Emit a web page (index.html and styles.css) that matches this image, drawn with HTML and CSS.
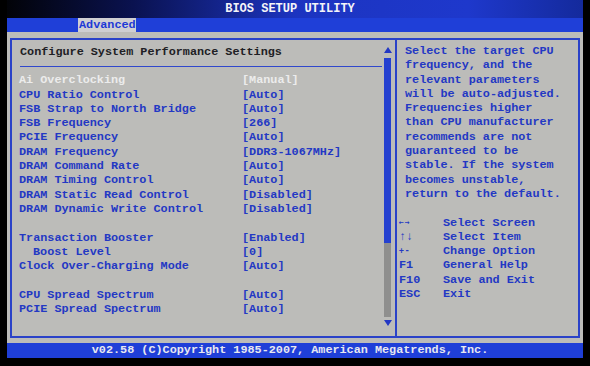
FILE: index.html
```html
<!DOCTYPE html>
<html lang="en">
<head>
  <meta charset="UTF-8" />
  <meta name="viewport" content="width=device-width, initial-scale=1.0" />
  <title>BIOS Setup Utility</title>
  <link rel="stylesheet" href="styles.css">
</head>
<body>
  <div class="screen">
    <header class="title-bar">BIOS SETUP UTILITY</header>
    <nav class="tab-bar">
      <span class="tab active">Advanced</span>
    </nav>

    <main class="panel">
      <div class="frame">
        <section class="settings">
          <div class="settings-body">
            <h1 class="heading">Configure System Performance Settings</h1>
            <ul class="items">
              <li class="item selected"><span>Ai Overclocking</span><span>[Manual]</span></li>
              <li class="item"><span>CPU Ratio Control</span><span>[Auto]</span></li>
              <li class="item"><span>FSB Strap to North Bridge</span><span>[Auto]</span></li>
              <li class="item"><span>FSB Frequency</span><span>[266]</span></li>
              <li class="item"><span>PCIE Frequency</span><span>[Auto]</span></li>
              <li class="item"><span>DRAM Frequency</span><span>[DDR3-1067MHz]</span></li>
              <li class="item"><span>DRAM Command Rate</span><span>[Auto]</span></li>
              <li class="item"><span>DRAM Timing Control</span><span>[Auto]</span></li>
              <li class="item"><span>DRAM Static Read Control</span><span>[Disabled]</span></li>
              <li class="item"><span>DRAM Dynamic Write Control</span><span>[Disabled]</span></li>
              <li class="item blank"></li>
              <li class="item"><span>Transaction Booster</span><span>[Enabled]</span></li>
              <li class="item sub"><span>Boost Level</span><span>[0]</span></li>
              <li class="item"><span>Clock Over-Charging Mode</span><span>[Auto]</span></li>
              <li class="item blank"></li>
              <li class="item"><span>CPU Spread Spectrum</span><span>[Auto]</span></li>
              <li class="item"><span>PCIE Spread Spectrum</span><span>[Auto]</span></li>
            </ul>
          </div>
          <div class="scrollbar">
            <span class="arrow up"></span>
            <span class="thumb"></span>
            <span class="track"></span>
            <span class="arrow down"></span>
          </div>
        </section>

        <aside class="help">
          <p class="help-text">Select the target CPU<br>frequency, and the<br>relevant parameters<br>will be auto-adjusted.<br>Frequencies higher<br>than CPU manufacturer<br>recommends are not<br>guaranteed to be<br>stable. If the system<br>becomes unstable,<br>return to the default.</p>
          <ul class="keys">
            <li><span class="key small">&larr;&rarr;</span>Select Screen</li>
            <li><span class="key">&uarr;&darr;</span>Select Item</li>
            <li><span class="key small">+-</span>Change Option</li>
            <li><span class="key">F1</span>General Help</li>
            <li><span class="key">F10</span>Save and Exit</li>
            <li><span class="key">ESC</span>Exit</li>
          </ul>
        </aside>
      </div>
    </main>

    <footer class="status-bar">v02.58 (C)Copyright 1985-2007, American Megatrends, Inc.</footer>
  </div>
</body>
</html>
```

FILE: styles.css
```css
body {
  margin: 0;
  background: #000;
  font-family: "Liberation Mono", "DejaVu Sans Mono", monospace;
  font-weight: bold;
  font-size: 11.8px;
}

.screen {
  width: 576px;
  margin-left: 7px;
  display: flex;
  flex-direction: column;
}

.title-bar {
  height: 18px;
  line-height: 18px;
  padding-right: 10px;
  text-align: center;
  color: #f4f4f8;
  font-size: 12px;
  background: linear-gradient(to right, #020308 0%, #0a1250 22%, #1c34c0 50%, #1e38cc 80%, #142a9c 100%);
}

.tab-bar {
  height: 14px;
  background: #1f3fd8;
  padding-left: 71px;
}

.tab {
  display: inline-block;
  height: 14px;
  line-height: 14px;
  padding: 0 0 0 1px;
  color: #1d3ad6;
  background: #cfcfd2;
}

.panel {
  height: 311px;
  box-sizing: border-box;
  padding: 6px 3px 5px 3px;
  background: #bcbcb9;
}

.frame {
  height: 100%;
  box-sizing: border-box;
  border: 2px solid #2a42c8;
  display: grid;
  grid-template-columns: 385px 1fr;
}

.settings {
  display: flex;
  border-right: 2px solid #2a42c8;
}

.settings-body {
  flex: 1;
  padding-left: 7px;
}

.heading {
  margin: 5px 0 0 1px;
  padding-bottom: 7px;
  font-size: 11.8px;
  line-height: 14.3px;
  color: #202024;
  border-bottom: 1.5px solid #3048cc;
}

.items {
  list-style: none;
  margin: 6px 0 0;
  padding: 0;
  color: #2338c4;
}

.item {
  display: grid;
  grid-template-columns: 223px 1fr;
  height: 14.3px;
  line-height: 14.3px;
}

.item.selected {
  color: #ececec;
}

.item.sub span:first-child {
  padding-left: 14px;
}

.scrollbar {
  width: 7px;
  margin: 7px 4px 0 2px;
  display: flex;
  flex-direction: column;
  align-items: center;
}

.arrow {
  width: 0;
  height: 0;
  border-left: 4px solid transparent;
  border-right: 4px solid transparent;
}

.arrow.up {
  border-bottom: 6px solid #2338c4;
  margin-bottom: 5px;
}

.arrow.down {
  border-top: 6px solid #2338c4;
  margin-top: 3px;
}

.thumb {
  width: 7px;
  height: 185px;
  background: #2440d0;
}

.track {
  width: 7px;
  height: 74px;
  background: #8f8f8e;
}

.help {
  color: #2338c4;
  padding-top: 4px;
}

.help-text {
  margin: 0 0 0 8px;
  line-height: 14.3px;
}

.keys {
  list-style: none;
  margin: 14.3px 0 0 2px;
  padding: 0;
}

.keys li {
  display: flex;
  height: 14.3px;
  line-height: 14.3px;
}

.key {
  width: 44px;
  flex-shrink: 0;
}

.key.small {
  font-family: "DejaVu Sans Mono", monospace;
  font-size: 8px;
  letter-spacing: 1px;
}

.status-bar {
  height: 15px;
  line-height: 15px;
  padding-right: 10px;
  text-align: center;
  color: #e8e8f0;
  background: #1f3fd8;
}
```
